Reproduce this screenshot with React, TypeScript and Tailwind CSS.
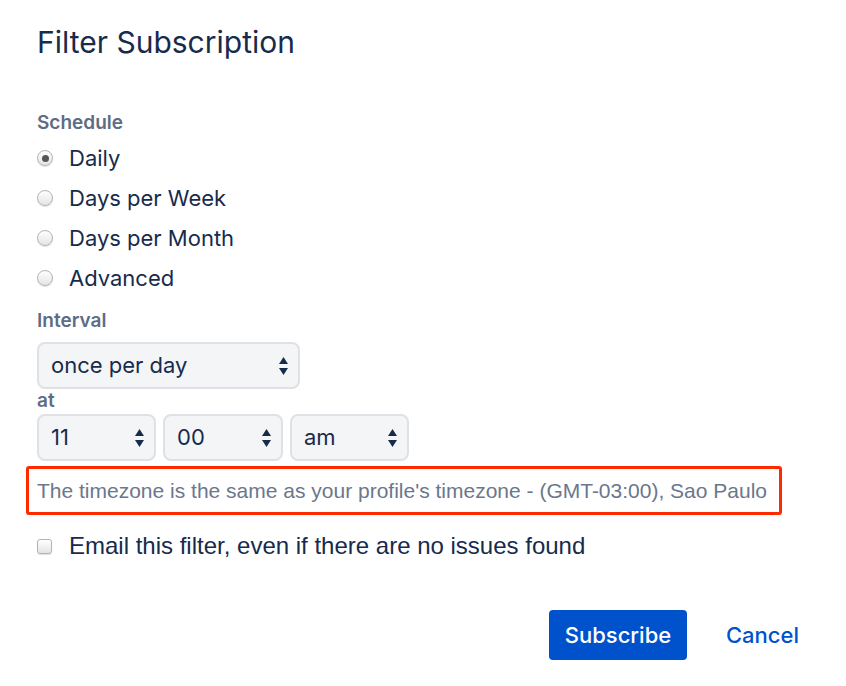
import React from 'react';

const SelectArrows: React.FC = () => (
  <svg width="9" height="18" viewBox="0 0 9 18" className="shrink-0">
    <path d="M4.5 0 L9 7 L0 7 Z" fill="#172B4D" />
    <path d="M0 11 L9 11 L4.5 18 Z" fill="#172B4D" />
  </svg>
);

interface FakeSelectProps {
  value: string;
  width: string;
}

const FakeSelect: React.FC<FakeSelectProps> = ({ value, width }) => (
  <div
    className={`${width} h-[47px] flex items-center justify-between pl-[12px] pr-[10px] rounded-[8px] border-2 border-[#DFE1E6] bg-[#F4F5F7] text-[22px] text-[#172B4D]`}
  >
    <span>{value}</span>
    <SelectArrows />
  </div>
);

const Radio: React.FC<{ label: string; checked?: boolean }> = ({ label, checked }) => (
  <div className="h-[40px] flex items-center">
    <span className="w-[16px] h-[16px] rounded-full border border-[#B3B3B3] bg-gradient-to-b from-white to-[#E4E4E4] shadow-[0_1px_1px_rgba(0,0,0,0.12)] flex items-center justify-center">
      {checked && <span className="w-[7px] h-[7px] rounded-full bg-[#555555]" />}
    </span>
    <span className="ml-[16px] text-[22px] text-[#172B4D]">{label}</span>
  </div>
);

export default function App() {
  return (
    <div
      className="w-[846px] h-[686px] bg-white pl-[37px] pt-[20px]"
      style={{ fontFamily: 'Inter, "Noto Sans", sans-serif' }}
    >
      <h1 className="text-[30px] leading-[44px] text-[#172B4D] font-normal">Filter Subscription</h1>

      <div className="mt-[47px] text-[19px] leading-[24px] font-semibold text-[#5E6C84]">Schedule</div>
      <div className="mt-[3px]">
        <Radio label="Daily" checked />
        <Radio label="Days per Week" />
        <Radio label="Days per Month" />
        <Radio label="Advanced" />
      </div>

      <div className="mt-[11px] text-[19px] leading-[24px] font-semibold text-[#5E6C84]">Interval</div>
      <div className="mt-[9px]">
        <FakeSelect value="once per day" width="w-[263px]" />
      </div>

      <div className="mt-[2px] text-[19px] leading-[20px] font-semibold text-[#5E6C84]">at</div>
      <div className="mt-[3px] flex gap-[7px]">
        <FakeSelect value="11" width="w-[119px]" />
        <FakeSelect value="00" width="w-[120px]" />
        <FakeSelect value="am" width="w-[119px]" />
      </div>

      <div className="mt-[5px] -ml-[11px] w-[756px] h-[49px] border-[3px] border-[#FF2A00] rounded-[3px] flex items-center pl-[8px]">
        <span
          className="text-[21px] text-[#6B778C] whitespace-nowrap"
          style={{ fontFamily: '"Liberation Sans", Arial, sans-serif' }}
        >
          The timezone is the same as your profile's timezone - (GMT-03:00), Sao Paulo
        </span>
      </div>

      <div className="mt-[19px] h-[24px] flex items-center">
        <span className="w-[15px] h-[15px] rounded-[3px] border border-[#B3B3B3] bg-gradient-to-b from-white to-[#E4E4E4] shadow-[0_1px_1px_rgba(0,0,0,0.12)]" />
        <span
          className="ml-[17px] text-[24px] text-[#172B4D] whitespace-nowrap"
          style={{ fontFamily: '"Liberation Sans", Arial, sans-serif' }}
        >
          Email this filter, even if there are no issues found
        </span>
      </div>

      <div className="mt-[52px] flex justify-end items-center pr-[47px]">
        <button className="h-[50px] w-[138px] rounded-[4px] bg-[#0052CC] text-white text-[22px] font-medium">
          Subscribe
        </button>
        <span className="ml-[39px] text-[22px] text-[#0052CC] font-medium">Cancel</span>
      </div>
    </div>
  );
}
